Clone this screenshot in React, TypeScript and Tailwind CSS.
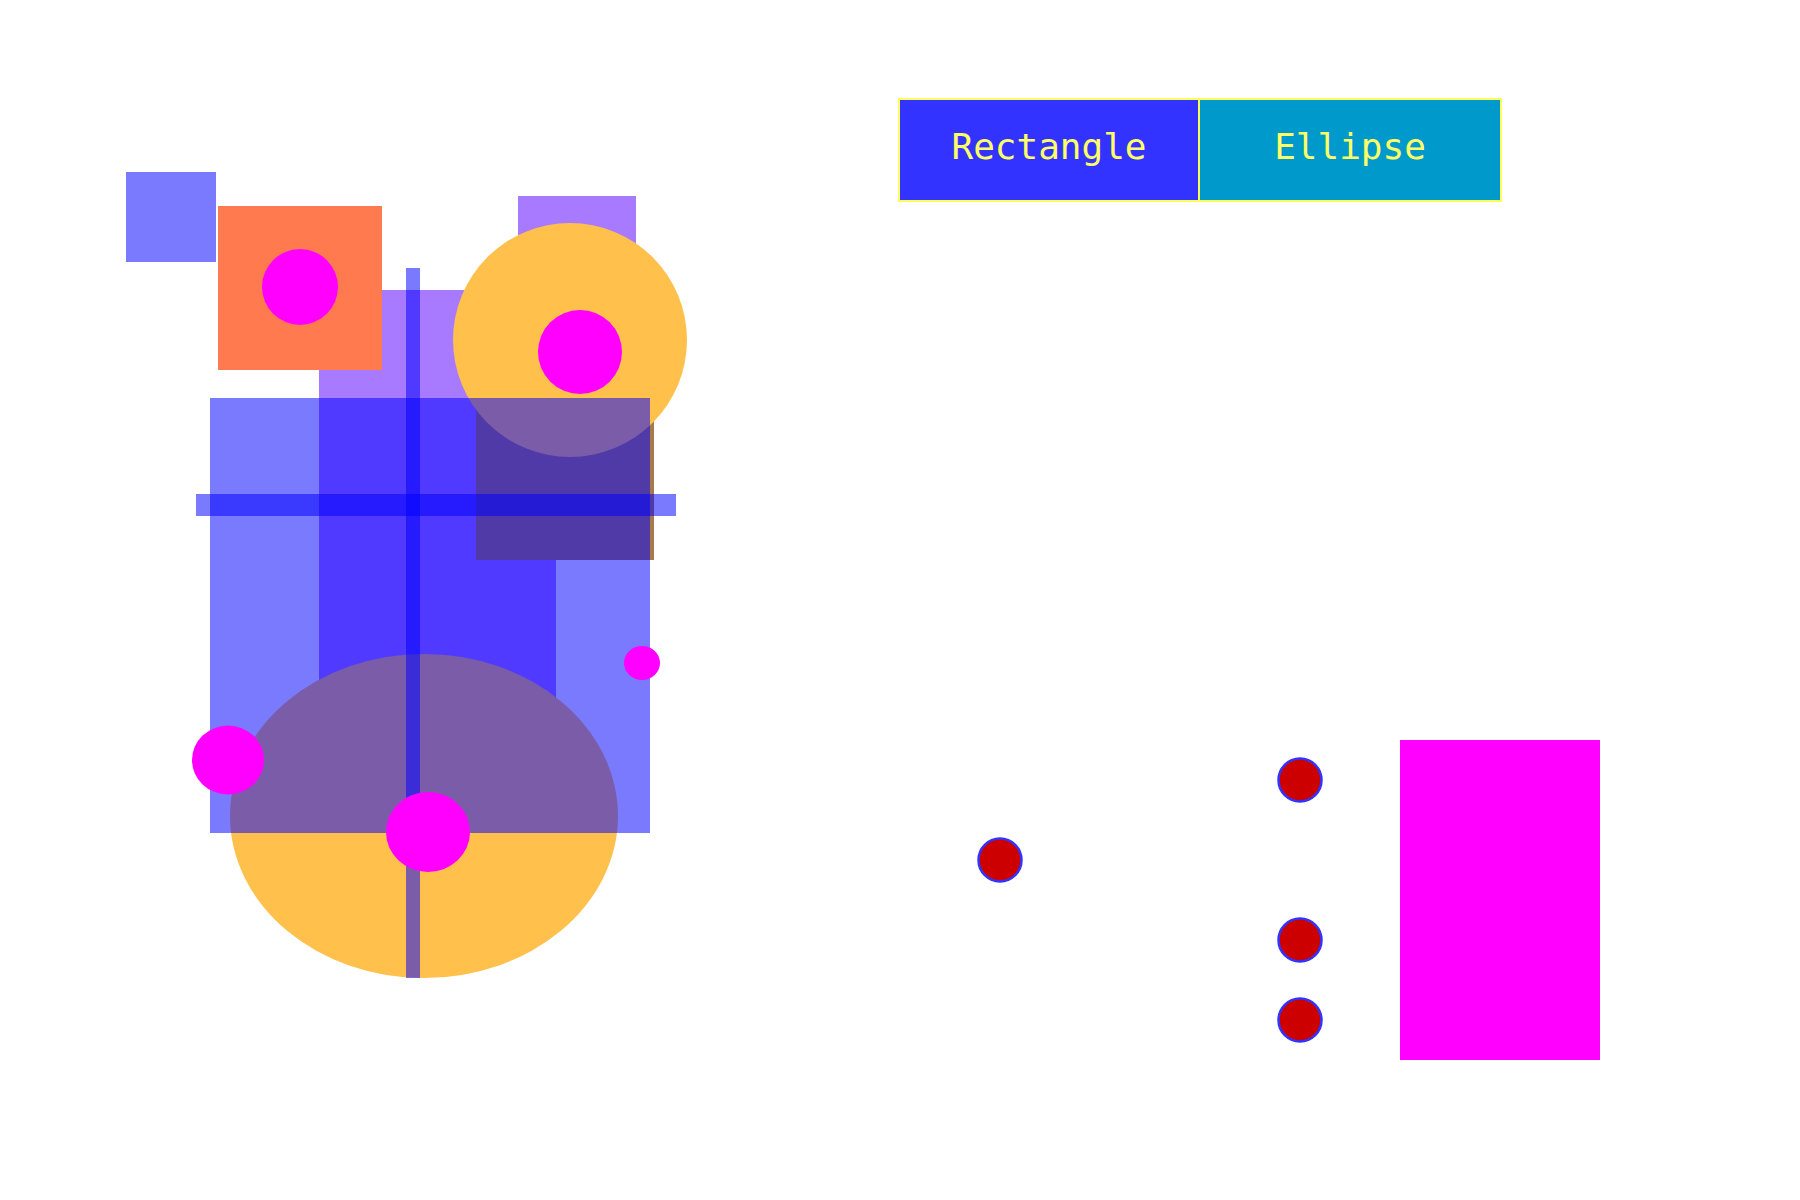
import { useState } from 'react'

const BLUE = 'rgba(0,0,255,0.52)'
const PURPLE = 'rgba(86,0,255,0.52)'
const YELLOW = '#ffc04c'
const MAGENTA = '#ff00ff'

type Tool = 'rect' | 'ellipse'

function Canvas() {
  return (
    <svg className="absolute inset-0" width={1800} height={1200} viewBox="0 0 1800 1200">
      {/* back layers */}
      <rect x={319} y={290} width={237} height={510} fill={PURPLE} />
      <rect x={518} y={196} width={118} height={150} fill={PURPLE} />
      <rect x={476} y={398} width={178} height={162} fill="#a8794a" />
      <circle cx={570} cy={340} r={117} fill={YELLOW} />
      <ellipse cx={424} cy={816} rx={194} ry={162} fill={YELLOW} />
      <rect x={218} y={206} width={164} height={164} fill="#ff7b4f" />

      {/* translucent blues */}
      <rect x={210} y={398} width={440} height={435} fill={BLUE} />
      <rect x={126} y={172} width={90} height={90} fill={BLUE} />
      <rect x={196} y={494} width={480} height={22} fill={BLUE} />
      <rect x={406} y={268} width={14} height={710} fill={BLUE} />

      {/* magenta dots */}
      <circle cx={300} cy={287} r={38} fill={MAGENTA} />
      <circle cx={580} cy={352} r={42} fill={MAGENTA} />
      <ellipse cx={428} cy={832} rx={42} ry={40} fill={MAGENTA} />
      <ellipse cx={228} cy={760} rx={36} ry={34.5} fill={MAGENTA} />
      <ellipse cx={642} cy={663} rx={18} ry={17} fill={MAGENTA} />

      {/* handles */}
      {[
        [1000, 860],
        [1300, 780],
        [1300, 940],
        [1300, 1020],
      ].map(([cx, cy]) => (
        <circle key={`${cx}-${cy}`} cx={cx} cy={cy} r={21.5} fill="#cc0000" stroke="#3333ff" strokeWidth={2.5} />
      ))}
      <rect x={1400} y={740} width={200} height={320} fill={MAGENTA} />
    </svg>
  )
}

export default function App() {
  const [tool, setTool] = useState<Tool>('rect')

  return (
    <div className="relative w-[1800px] h-[1200px] bg-white overflow-hidden">
      <Canvas />
      <div className="relative flex pl-[898px] pt-[98px] font-['DejaVu_Sans_Mono',monospace] text-[36px] text-[#ffff66]">
        <button
          onClick={() => setTool('rect')}
          className="w-[302px] h-[104px] flex items-center justify-center pb-[7px] border-2 border-[#ffff55] bg-[#3333ff]"
          aria-pressed={tool === 'rect'}
        >
          Rectangle
        </button>
        <button
          onClick={() => setTool('ellipse')}
          className="w-[302px] h-[104px] flex items-center justify-center pb-[7px] border-2 border-l-0 border-[#ffff55] bg-[#0099cc]"
          aria-pressed={tool === 'ellipse'}
        >
          Ellipse
        </button>
      </div>
    </div>
  )
}
